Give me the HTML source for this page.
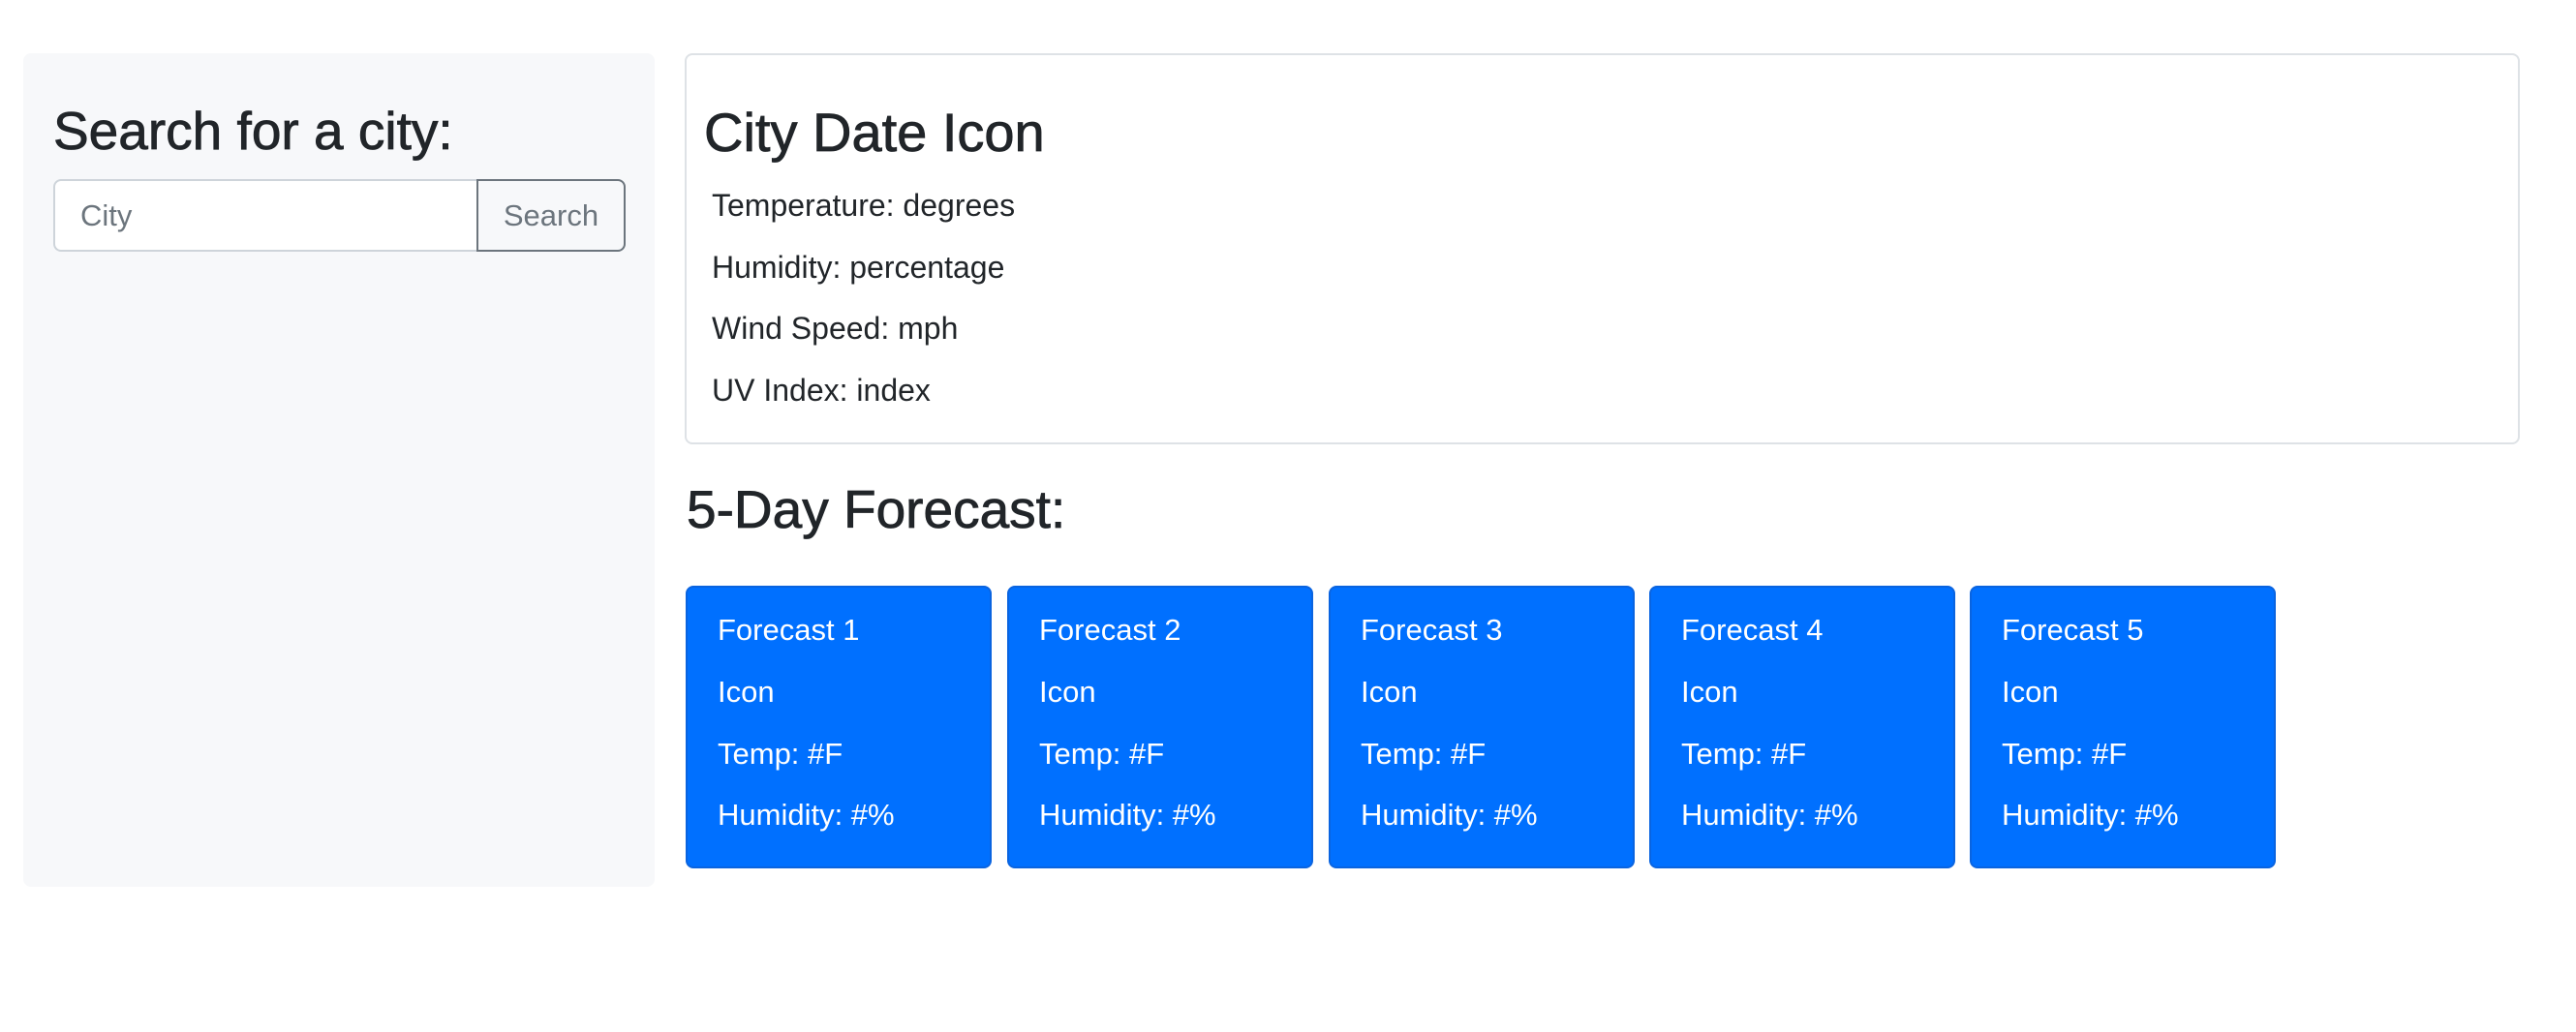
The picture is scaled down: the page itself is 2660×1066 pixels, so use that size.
<!DOCTYPE html>
<html><head><meta charset="utf-8"><style>
*{box-sizing:border-box;margin:0;padding:0}
body{width:2660px;height:1066px;background:#fff;font-family:"Liberation Sans",Arial,sans-serif;color:#212529;position:relative;overflow:hidden}
.abs{position:absolute}
.side{left:24px;top:55px;width:652px;height:861px;background:#f7f8fa;border-radius:8px}
h3{font-weight:500;font-size:55px;line-height:1.2;position:absolute;white-space:nowrap;-webkit-text-stroke:0.8px #212529}
.inp{left:55px;top:185px;width:438px;height:75px;border:2px solid #ced4da;border-right:none;border-radius:8px 0 0 8px;background:#fff;color:#6c757d;font-size:31px;line-height:71px;padding-left:26px}
.btn{left:492px;top:185px;width:154px;height:75px;border:2px solid #6c757d;border-radius:0 8px 8px 0;color:#6c757d;font-size:31px;line-height:71px;text-align:center}
.card{left:707px;top:55px;width:1895px;height:404px;border:2px solid #dee2e6;border-radius:8px}
.t{font-size:31px;position:absolute;white-space:nowrap;line-height:1}
.b{font-size:32px}
.fc{top:605px;width:316px;height:292px;background:#0070ff;border:2px solid #0a64e0;border-radius:8px;color:#fff}
.fc .t{left:31px}
</style></head><body>
<div class="abs side"></div>
<h3 style="left:55px;top:102px">Search for a city:</h3>
<div class="abs inp">City</div>
<div class="abs btn">Search</div>
<div class="abs card"></div>
<h3 style="left:727px;top:103px;font-size:56px">City Date Icon</h3>
<div class="t b" style="left:735px;top:196px">Temperature: degrees</div>
<div class="t b" style="left:735px;top:260px">Humidity: percentage</div>
<div class="t b" style="left:735px;top:323px">Wind Speed: mph</div>
<div class="t b" style="left:735px;top:387px">UV Index: index</div>
<h3 style="left:709px;top:493px">5-Day Forecast:</h3>
<div class="abs fc" style="left:708px"><div class="t" style="top:28px">Forecast 1</div><div class="t" style="top:92px">Icon</div><div class="t" style="top:156px">Temp: #F</div><div class="t" style="top:219px">Humidity: #%</div></div>
<div class="abs fc" style="left:1040px"><div class="t" style="top:28px">Forecast 2</div><div class="t" style="top:92px">Icon</div><div class="t" style="top:156px">Temp: #F</div><div class="t" style="top:219px">Humidity: #%</div></div>
<div class="abs fc" style="left:1372px"><div class="t" style="top:28px">Forecast 3</div><div class="t" style="top:92px">Icon</div><div class="t" style="top:156px">Temp: #F</div><div class="t" style="top:219px">Humidity: #%</div></div>
<div class="abs fc" style="left:1703px"><div class="t" style="top:28px">Forecast 4</div><div class="t" style="top:92px">Icon</div><div class="t" style="top:156px">Temp: #F</div><div class="t" style="top:219px">Humidity: #%</div></div>
<div class="abs fc" style="left:2034px"><div class="t" style="top:28px">Forecast 5</div><div class="t" style="top:92px">Icon</div><div class="t" style="top:156px">Temp: #F</div><div class="t" style="top:219px">Humidity: #%</div></div>
</body></html>
